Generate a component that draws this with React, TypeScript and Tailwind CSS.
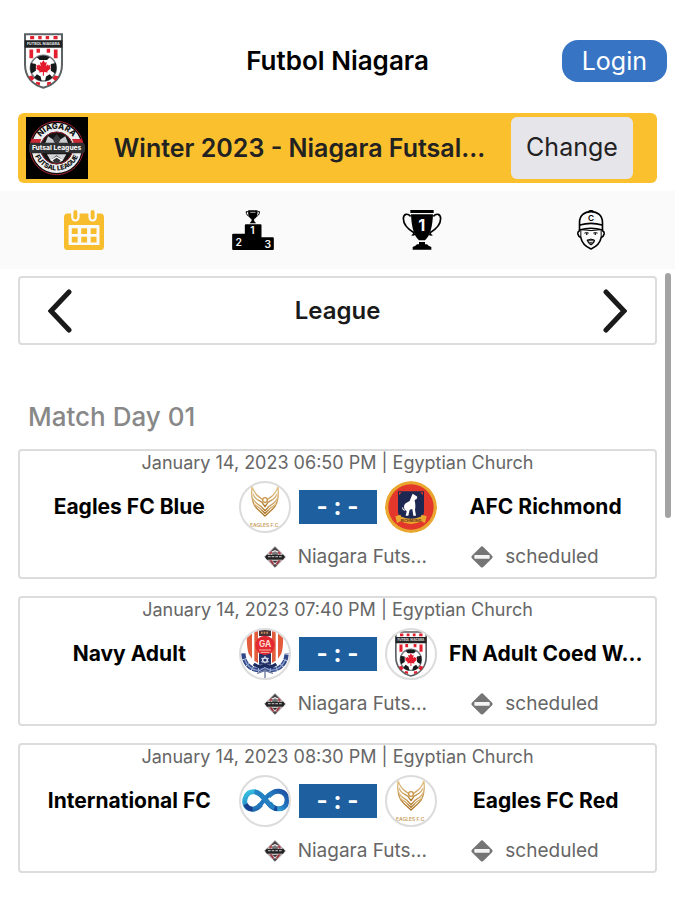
import { useState } from 'react';
import clsx from 'clsx';

type LogoName = 'eagles' | 'richmond' | 'navy' | 'niagara' | 'international';

interface Match {
    id: number;
    date: string;
    venue: string;
    home: string;
    homeLogo: LogoName;
    away: string;
    awayLogo: LogoName;
    competition: string;
    status: string;
}

const matches: Match[] = [
    {
        id: 1,
        date: 'January 14, 2023 06:50 PM',
        venue: 'Egyptian Church',
        home: 'Eagles FC Blue',
        homeLogo: 'eagles',
        away: 'AFC Richmond',
        awayLogo: 'richmond',
        competition: 'Niagara Futs...',
        status: 'scheduled',
    },
    {
        id: 2,
        date: 'January 14, 2023 07:40 PM',
        venue: 'Egyptian Church',
        home: 'Navy Adult',
        homeLogo: 'navy',
        away: 'FN Adult Coed W...',
        awayLogo: 'niagara',
        competition: 'Niagara Futs...',
        status: 'scheduled',
    },
    {
        id: 3,
        date: 'January 14, 2023 08:30 PM',
        venue: 'Egyptian Church',
        home: 'International FC',
        homeLogo: 'international',
        away: 'Eagles FC Red',
        awayLogo: 'eagles',
        competition: 'Niagara Futs...',
        status: 'scheduled',
    },
];

function ShieldLogo({ className }: { className?: string }) {
    return (
        <svg viewBox="0 0 115 164" className={className} aria-hidden="true">
            <path d="M3 3H112V92C112 130 88 153 57 161C27 153 3 130 3 92Z" fill="#fff" stroke="#5c6164" strokeWidth="6" />
            <g fill="#e3202f">
                <path d="M18 8h12v10H18zM42 8h10v10H42zM64 8h10v10H64zM87 8h12v10H87z" />
                <path d="M16 48h11v26H16zM37 46h10v12H37zM67 46h10v12H67zM88 48h11v26H88z" />
                <path d="M13 128l14-5 5 10-10 8zM102 128l-14-5-5 10 10 8zM36 143l11 2v9l-12-5zM79 143l-11 2v9l12-5z" />
            </g>
            <path d="M2 21H113V43H2Z" fill="#202224" />
            <text x="57" y="36" textAnchor="middle" fontSize="11" fontWeight="700" fill="#e5e8ea" fontFamily="Inter, sans-serif">FUTBOL NIAGARA</text>
            <circle cx="57" cy="103" r="38" fill="#fff" stroke="#777c80" strokeWidth="5" />
            <g fill="#161819">
                <path d="M38 71Q57 61 76 71L68 79H46Z" />
                <path d="M20 88Q16 106 22 119L35 111V91Z" />
                <path d="M94 88Q98 106 92 119L79 111V91Z" />
                <path d="M30 131Q41 142 52 142L49 128L38 121Z" />
                <path d="M84 131Q73 142 62 142L65 128L76 121Z" />
            </g>
            <path
                transform="translate(32 77) scale(2.1)"
                fill="#e21a2c"
                d="M12 1L9.8 5 7.2 3.8 8.3 9.6 5.6 7 5 8.6 1.9 8 3 11.6 1.5 12.4 6.5 16.6 5.9 18.6 11.2 17.8V23H12.8V17.8L18.1 18.6 17.5 16.6 22.5 12.4 21 11.6 22.1 8 19 8.6 18.4 7 15.7 9.6 16.8 3.8 14.2 5Z"
            />
        </svg>
    );
}

function FutsalLogo({ className }: { className?: string }) {
    return (
        <svg viewBox="0 0 186 186" className={className} aria-hidden="true">
            <path d="M0 0H186V186H0Z" fill="#000" />
            <circle cx="92" cy="93" r="80" fill="#090909" stroke="#a52431" strokeWidth="3" />
            <circle cx="92" cy="93" r="62" fill="none" stroke="#ededed" strokeWidth="26" />
            <circle cx="92" cy="93" r="48" fill="#151515" stroke="#8d2430" strokeWidth="3" />
            <path d="M66 58L80 67 92 63 104 67 118 58 127 80H57Z" fill="#c8cbcd" />
            <path d="M80 67L92 52 104 67 98 78H86Z" fill="#3a3c3e" />
            <path d="M63 112H121L110 131Q92 142 74 131Z" fill="#d4d6d7" />
            <path d="M92 115L106 126 99 137H85L78 126Z" fill="#333" />
            <path d="M76 130L92 120 108 130" fill="none" stroke="#fff" strokeWidth="4" />
            <path d="M18 66H46L42 78H14ZM138 66H166L171 78H143Z" fill="#c92a36" />
            <rect x="9" y="77" width="168" height="32" rx="10" fill="#2d2f30" />
            <text x="92" y="100" textAnchor="middle" fontSize="20" fontWeight="800" fill="#f2f2f2" fontFamily="Inter, sans-serif">Futsal Leagues</text>
            <path id="futsal-top" d="M36 76A59 59 0 0 1 148 76" fill="none" />
            <path id="futsal-bottom" d="M24 107A70 70 0 0 0 160 107" fill="none" />
            <text fontSize="24" fontWeight="800" fill="#111" fontFamily="Inter, sans-serif">
                <textPath href="#futsal-top" startOffset="50%" textAnchor="middle">NIAGARA</textPath>
            </text>
            <text fontSize="20" fontWeight="800" fill="#111" fontFamily="Inter, sans-serif">
                <textPath href="#futsal-bottom" startOffset="50%" textAnchor="middle">FUTSAL LEAGUE</textPath>
            </text>
        </svg>
    );
}

function CompetitionIcon() {
    return (
        <svg viewBox="0 0 66 66" className="size-[22px] shrink-0" aria-hidden="true">
            <path d="M33 2L64 33 33 64 2 33Z" fill="#efefef" stroke="#555" strokeWidth="2" strokeLinejoin="round" />
            <path d="M33 3L47 17 39 15 33 12 27 15 19 17Z" fill="#4a4346" />
            <path d="M15 21L22 15 26 20 18 27ZM51 21L44 15 40 20 48 27Z" fill="#b1434e" />
            <path d="M22 22L33 16 44 22 40 27H26Z" fill="#77797b" />
            <path d="M8 26H58L63 33 57 41H9L3 33Z" fill="#242324" />
            <path d="M12 32H20M23 32H31M34 32H42M45 32H53" stroke="#aaa" strokeWidth="4" />
            <path d="M15 43H24L31 55 27 57Z" fill="#9d3541" />
            <path d="M51 43H42L35 55 39 57Z" fill="#9d3541" />
            <path d="M25 44H41L33 52Z" fill="#333" />
            <path d="M27 58L33 54 39 58 33 64Z" fill="#444" />
        </svg>
    );
}

function StatusIcon() {
    return (
        <svg viewBox="0 0 66 66" className="size-[22px] shrink-0" aria-hidden="true">
            <path d="M33 8L58 33 33 58 8 33Z" fill="#757575" stroke="#757575" strokeWidth="13" strokeLinejoin="round" />
            <rect x="10" y="27" width="46" height="11" rx="2" fill="#f4f4f4" />
        </svg>
    );
}

function CalendarIcon() {
    return (
        <svg viewBox="0 0 123 123" className="size-10" aria-hidden="true">
            <rect x="0" y="11" width="123" height="112" rx="11" fill="#f8bd2d" />
            <rect x="14" y="46" width="95" height="62" rx="3" fill="#fafafa" />
            <g fill="#fafafa">
                <rect x="22" y="-4" width="26" height="39" rx="13" />
                <rect x="75" y="-4" width="26" height="39" rx="13" />
            </g>
            <g fill="#f8bd2d">
                <rect x="29" y="0" width="12" height="29" rx="6" />
                <rect x="82" y="0" width="12" height="29" rx="6" />
                <path d="M24 56h18v18H24zM53 56h18v18H53zM82 56h18v18H82zM24 82h18v18H24zM53 82h18v18H53zM82 82h18v18H82z" />
            </g>
        </svg>
    );
}

function PodiumIcon() {
    return (
        <svg viewBox="0 0 125 120" className="h-10 w-[42px]" aria-hidden="true">
            <path d="M0 74Q0 71 3 71H38V46Q38 43 41 43H85Q88 43 88 46V82H122Q125 82 125 85V117Q125 120 122 120H3Q0 120 0 117Z" />
            <path d="M48 1H76V8C76 20 70 25 66 27V33L72 40H52L58 33V27C54 25 48 20 48 8Z" />
            <path d="M48 5H42C42 13 46 18 52 19M76 5H82C82 13 78 18 72 19" fill="none" stroke="#000" strokeWidth="3" />
            <path d="M54 7H70" stroke="#fafafa" strokeWidth="2" />
            <g fill="#fafafa" fontFamily="Inter, sans-serif" fontWeight="600" textAnchor="middle">
                <text x="61" y="71" fontSize="31">1</text>
                <text x="20" y="107" fontSize="31">2</text>
                <text x="107" y="114" fontSize="31">3</text>
            </g>
        </svg>
    );
}

function TrophyIcon() {
    return (
        <svg viewBox="0 0 118 120" className="size-10" aria-hidden="true">
            <path d="M24 0H94V9H24ZM26 13H92C91 46 84 78 68 91H50C34 78 27 46 26 13Z" />
            <path d="M50 96H68V103H74Q77 108 87 111V119H31V111Q41 108 44 103H50Z" />
            <path d="M25 19C16 9 4 11 3 25C3 43 15 57 35 68M93 19C102 9 114 11 115 25C115 43 103 57 83 68" fill="none" stroke="#000" strokeWidth="5" />
            <path d="M26 76Q33 74 33 63L39 74Q34 79 26 76ZM92 76Q85 74 85 63L79 74Q84 79 92 76Z" />
            <text x="58" y="62" fontSize="49" fontWeight="700" textAnchor="middle" fill="#fafafa" fontFamily="Inter, sans-serif">1</text>
        </svg>
    );
}

function CoachIcon() {
    return (
        <svg viewBox="0 0 84 122" className="h-10 w-7" fill="none" stroke="#000" strokeWidth="5" strokeLinecap="round" strokeLinejoin="round" aria-hidden="true">
            <path d="M7 61V38C7 17 22 5 42 5C62 5 77 17 77 38V61" />
            <path d="M36 4Q42 0 48 4" />
            <path d="M8 46Q42 36 76 46M7 61Q42 50 77 61" />
            <path d="M12 60Q42 66 72 60" strokeWidth="3" />
            <path d="M7 63Q1 66 2 73Q4 81 11 84C14 100 27 112 42 119C57 112 70 100 73 84Q80 81 82 73Q83 66 77 63" />
            <path d="M11 64V82M73 64V82" strokeWidth="3" />
            <path d="M23 70Q29 67 34 70M50 70Q55 67 61 70" strokeWidth="3" />
            <path d="M29 73V74M55 73V74" />
            <path d="M31 92Q42 85 53 92Q52 102 42 107Q32 102 31 92Z" fill="#555" strokeWidth="3" />
            <path d="M37 96H47" stroke="#ddd" strokeWidth="3" />
            <text x="42" y="35" fontSize="25" fontWeight="600" fill="#000" stroke="none" textAnchor="middle" fontFamily="Inter, sans-serif">C</text>
        </svg>
    );
}

function EaglesLogo() {
    return (
        <svg viewBox="6 6 144 144" className="size-full" aria-hidden="true">
            <defs>
                <linearGradient id="gold" x1="0" y1="0" x2="0" y2="1">
                    <stop offset="0" stopColor="#e6c58c" />
                    <stop offset="1" stopColor="#a9701f" />
                </linearGradient>
            </defs>
            <g fill="none" stroke="url(#gold)" strokeWidth="4" strokeLinejoin="round">
                <path d="M39 16C36 45 39 70 56 85L78 105 100 85C117 70 120 45 117 16C112 33 105 42 93 50C84 56 80 58 78 65C76 58 72 56 63 50C51 42 44 33 39 16Z" />
                <path d="M43 38C44 54 60 57 69 64L78 77 87 64C96 57 112 54 113 38" />
                <path d="M42 52C45 65 57 69 66 76L78 89 90 76C99 69 111 65 114 52" />
                <path d="M46 69C53 77 61 79 67 86L78 97 89 86C95 79 103 77 110 69" />
            </g>
            <circle cx="78" cy="57" r="7" fill="#fff" stroke="#c99443" strokeWidth="4" />
            <text x="78" y="138" textAnchor="middle" fontSize="15" fontWeight="600" fill="#c79b58" fontFamily="Inter, sans-serif">EAGLES F.C.</text>
        </svg>
    );
}

function RichmondLogo() {
    return (
        <svg viewBox="0 0 156 156" className="size-full" aria-hidden="true">
            <circle cx="78" cy="78" r="78" fill="#e9a72f" />
            <circle cx="78" cy="78" r="68" fill="#e3372b" />
            <path d="M39 31H117V91C117 109 101 119 78 126C55 119 39 109 39 91Z" fill="#1d2852" />
            <path d="M42 34H50L42 43ZM114 34H106L114 43Z" fill="#e3372b" />
            <path d="M83 38L90 43 97 47 95 54 89 57C91 68 92 76 90 86L93 104H85L82 84 74 86 70 104H62L65 91 60 86C55 80 57 71 62 67L74 60 79 47Z" fill="#fff" />
            <path d="M60 88Q51 87 53 79" fill="none" stroke="#fff" strokeWidth="3" />
            <path d="M31 106L46 101 49 107Q78 119 107 107L110 101 125 106 120 126 109 121Q78 137 47 121L36 126Z" fill="#e9a72f" />
            <text x="78" y="124" textAnchor="middle" fontSize="11" fontWeight="800" fill="#78401c" fontFamily="Inter, sans-serif">RICHMOND</text>
        </svg>
    );
}

function NavyLogo() {
    return (
        <svg viewBox="6 6 144 144" className="size-full" aria-hidden="true">
            <path d="M26 14Q78 -14 130 14V66Q127 93 109 110H47Q29 93 26 66Z" fill="#fff" />
            <path d="M24 18L39 8V92L29 77Q22 55 24 18ZM46 6L57 2V105L46 98ZM132 18L117 8V92L127 77Q134 55 132 18ZM110 6L99 2V105L110 98Z" fill="#e25d3c" />
            <path d="M60 1H96V24H60Z" fill="#463238" />
            <path d="M66 14H90" stroke="#d08a58" strokeWidth="6" strokeDasharray="5 3" />
            <path d="M60 76H96V110H60Z" fill="#26346a" />
            <circle cx="78" cy="52" r="29" fill="#e32832" />
            <text x="78" y="58" textAnchor="middle" fontSize="25" fontWeight="700" fill="#ffd9cd" fontFamily="Inter, sans-serif">GA</text>
            <path d="M60 66H96M65 73H91" stroke="#f8b8a4" strokeWidth="3" />
            <path d="M78 85L88 102H68ZM78 107L68 91H88Z" fill="none" stroke="#e3e6f4" strokeWidth="3" />
            <path d="M13 76Q15 111 43 123Q62 130 78 118Q94 130 113 123Q141 111 143 76" fill="none" stroke="#2f4788" strokeWidth="13" strokeDasharray="17 2" />
            <path d="M16 92Q30 128 62 127L78 119 94 127Q126 128 140 92" fill="none" stroke="#8ea1cd" strokeWidth="4" />
            <path d="M44 108Q63 123 78 111Q93 123 112 108" fill="none" stroke="#1c2b61" strokeWidth="9" />
            <path d="M54 136L78 128 102 136M78 119V150" fill="none" stroke="#69769b" strokeWidth="4" />
        </svg>
    );
}

function InternationalLogo() {
    return (
        <svg viewBox="8 6 144 144" className="size-full" fill="none" aria-hidden="true">
            <defs>
                <linearGradient id="loop-left" x1="0" y1="0" x2="1" y2="1">
                    <stop offset="0" stopColor="#38c4e4" />
                    <stop offset="1" stopColor="#16459a" />
                </linearGradient>
                <linearGradient id="loop-right" x1="0" y1="1" x2="1" y2="0">
                    <stop offset="0" stopColor="#48c4e2" />
                    <stop offset="0.5" stopColor="#2378c0" />
                    <stop offset="1" stopColor="#1c4ca0" />
                </linearGradient>
            </defs>
            <path d="M90 64C101 52 111 48 122 49C139 51 148 63 146 79C144 96 131 103 117 101C106 100 97 91 94 83" stroke="url(#loop-right)" strokeWidth="15" />
            <path d="M68 88C58 100 49 104 39 102C22 100 17 86 20 72C24 55 36 49 48 50C65 52 75 67 87 81C96 93 105 101 117 101" stroke="url(#loop-left)" strokeWidth="15" />
            <path d="M61 94C73 84 80 67 94 58" stroke="#2278be" strokeWidth="13" />
            <path d="M49 50C65 53 75 67 87 81C94 90 101 97 108 99" stroke="#2380c2" strokeWidth="13" />
            <path d="M22 88Q29 103 43 102" stroke="#17418f" strokeWidth="14" />
        </svg>
    );
}

function TeamLogo({ name }: { name: LogoName }) {
    return (
        <div
            className={clsx(
                'flex size-[52px] shrink-0 items-center justify-center overflow-hidden rounded-full bg-white',
                name !== 'richmond' && 'border-2 border-[#dcdcdc]'
            )}
        >
            {name === 'eagles' && <EaglesLogo />}
            {name === 'richmond' && <RichmondLogo />}
            {name === 'navy' && <NavyLogo />}
            {name === 'niagara' && <ShieldLogo className="h-[46px] w-8" />}
            {name === 'international' && <InternationalLogo />}
        </div>
    );
}

function Chevron({ direction }: { direction: 'left' | 'right' }) {
    return (
        <svg viewBox="0 0 24 44" className="h-11 w-6" fill="none" stroke="#1a1a1a" strokeWidth="5" strokeLinecap="round" aria-hidden="true">
            <path d={direction === 'left' ? 'M21 3L3 22 21 41' : 'M3 3L21 22 3 41'} />
        </svg>
    );
}

function MatchCard({ match }: { match: Match }) {
    return (
        <li className="rounded-sm border-2 border-[#dcdcdc] bg-white pb-2">
            <p className="text-center text-lg leading-6 text-[#666]">
                {match.date} | {match.venue}
            </p>
            <div className="mt-1.5 grid grid-cols-[1fr_auto_1fr] items-center">
                <h3 className="text-center text-[21px] leading-7 font-bold whitespace-nowrap text-black">{match.home}</h3>
                <div className="flex items-center gap-2">
                    <TeamLogo name={match.homeLogo} />
                    <div className="flex h-[34px] w-[78px] items-center justify-center bg-[#1d5f9f] text-2xl font-bold text-white">
                        <span className="whitespace-pre">- : -</span>
                    </div>
                    <TeamLogo name={match.awayLogo} />
                </div>
                <h3 className="text-center text-[21px] leading-7 font-bold whitespace-nowrap text-black">{match.away}</h3>
            </div>
            <div className="mt-3 grid grid-cols-3 text-[19px] leading-6 text-[#666]">
                <div className="col-start-2 flex items-center gap-3 pl-8 whitespace-nowrap">
                    <CompetitionIcon />
                    <span>{match.competition}</span>
                </div>
                <div className="flex items-center gap-3 pl-7">
                    <StatusIcon />
                    <span>{match.status}</span>
                </div>
            </div>
        </li>
    );
}

const tabs = [
    { id: 'schedule', label: 'Schedule', Icon: CalendarIcon },
    { id: 'standings', label: 'Standings', Icon: PodiumIcon },
    { id: 'cups', label: 'Cups', Icon: TrophyIcon },
    { id: 'coaches', label: 'Coaches', Icon: CoachIcon },
];

export default function App() {
    const [activeTab, setActiveTab] = useState('schedule');

    return (
        <div className="min-h-screen bg-white font-['Inter',sans-serif]">
            <header className="grid grid-cols-[1fr_auto_1fr] items-center px-2 pt-[33px] pb-6">
                <ShieldLogo className="ml-4 h-14 w-[39px]" />
                <h1 className="text-[26px] leading-8 font-semibold text-black">Futbol Niagara</h1>
                <button type="button" className="h-[42px] justify-self-end rounded-2xl bg-[#3874c4] px-5 text-[25px] leading-8 text-white">
                    Login
                </button>
            </header>

            <section className="mx-[18px] flex items-center rounded-md bg-[#fbc02d] py-1 pr-6 pl-2">
                <FutsalLogo className="size-[62px] shrink-0" />
                <h2 className="min-w-0 flex-1 truncate text-center text-[25px] leading-8 font-semibold text-[#222]">
                    Winter 2023 - Niagara Futsal...
                </h2>
                <button type="button" className="h-[62px] w-[122px] shrink-0 rounded-md bg-[#e6e5ea] text-[25px] text-[#222]">
                    Change
                </button>
            </section>

            <nav className="mt-2 grid grid-cols-4 bg-[#fafafa]">
                {tabs.map(({ id, label, Icon }) => (
                    <button
                        key={id}
                        type="button"
                        aria-label={label}
                        aria-pressed={activeTab === id}
                        onClick={() => setActiveTab(id)}
                        className="flex h-[78px] items-center justify-center"
                    >
                        <Icon />
                    </button>
                ))}
            </nav>

            <main className="relative px-[18px] pt-[7px] pb-6">
                <div className="flex h-[69px] items-center justify-between rounded-sm border-2 border-[#dcdcdc] px-7">
                    <button type="button" aria-label="Previous">
                        <Chevron direction="left" />
                    </button>
                    <h2 className="text-2xl font-semibold text-[#1a1a1a]">League</h2>
                    <button type="button" aria-label="Next">
                        <Chevron direction="right" />
                    </button>
                </div>

                <h2 className="mt-14 mb-4 pl-2.5 text-[26px] leading-8 font-medium text-[#888]">Match Day 01</h2>

                <ul className="flex flex-col gap-[17px]">
                    {matches.map((match) => (
                        <MatchCard key={match.id} match={match} />
                    ))}
                </ul>

                <div className="absolute top-1 right-1 h-[245px] w-[6px] rounded-full bg-[#a3a3a3]" />
            </main>
        </div>
    );
}
